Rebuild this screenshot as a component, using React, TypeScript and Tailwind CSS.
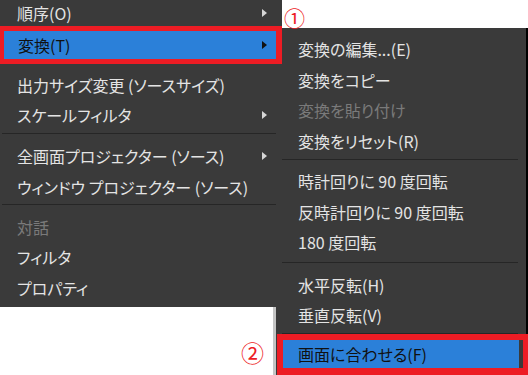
import React from "react";

const Arrow = ({ dark = false }: { dark?: boolean }) => (
  <span
    className={
      dark
        ? "h-0 w-0 border-y-[4px] border-l-[5px] border-y-transparent border-l-[#111111]"
        : "h-0 w-0 border-y-[4px] border-l-[5px] border-y-transparent border-l-[#d6d6d6]"
    }
  />
);

const LRow = ({
  label,
  h,
  arrow = false,
  disabled = false,
}: {
  label: string;
  h: string;
  arrow?: boolean;
  disabled?: boolean;
}) => (
  <div className={`flex items-center justify-between pl-[17px] pr-[15px] ${h}`}>
    <span className={disabled ? "text-[#7a7a7a]" : "text-[#e4e4e4]"}>{label}</span>
    {arrow && <Arrow />}
  </div>
);

const RRow = ({ label, h, disabled = false }: { label: string; h: string; disabled?: boolean }) => (
  <div className={`flex items-center pl-[16px] ${h}`}>
    <span className={disabled ? "text-[#7a7a7a]" : "text-[#e4e4e4]"}>{label}</span>
  </div>
);

export default function App() {
  return (
    <div className="flex h-[375px] w-[528px] overflow-hidden bg-white font-['Noto_Sans_CJK_JP','Noto_Sans',sans-serif] text-[16px] leading-none [font-feature-settings:'palt']">
      {/* left column */}
      <div className="flex w-[282px] flex-col">
        <div className="flex h-[307px] flex-col bg-[#3a3a3a]">
          <LRow label="順序(O)" h="h-[26px]" arrow />
          <div className="flex h-[38px] border-b-[5px] border-l-[4px] border-r-[6px] border-t-[5px] border-[#ed1c24]">
            <div className="flex flex-1 items-center justify-between bg-[#2b80d9] pl-[14px] pr-[9px]">
              <span className="text-[#111111]">変換(T)</span>
              <Arrow dark />
            </div>
          </div>
          <div className="h-[6px]" />
          <LRow label="出力サイズ変更 (ソースサイズ)" h="h-[30px]" />
          <LRow label="スケールフィルタ" h="h-[30px]" arrow />
          <div className="pb-[6px] pt-[3px]">
            <div className="ml-[2px] mr-[6px] h-px bg-[#262626]" />
          </div>
          <LRow label="全画面プロジェクター (ソース)" h="h-[31px]" arrow />
          <LRow label="ウィンドウ プロジェクター (ソース)" h="h-[31px]" />
          <div className="pb-[7px] pt-[2px]">
            <div className="ml-[2px] mr-[6px] h-px bg-[#262626]" />
          </div>
          <LRow label="対話" h="h-[30px]" disabled />
          <LRow label="フィルタ" h="h-[30px]" />
          <LRow label="プロパティ" h="h-[31px]" />
        </div>
        <div className="flex h-[68px]">
          <div className="relative w-[273px] bg-white">
            <span className="absolute left-[241px] top-[34px] text-[23px] text-[#ed1c24]">②</span>
          </div>
          <div className="w-[3px] bg-[#c4c4c4]" />
          <div className="flex-1 bg-[#3a3a3a]" />
        </div>
      </div>

      {/* right column */}
      <div className="flex flex-1 flex-col">
        <div className="relative h-[28px] bg-white">
          <span className="absolute left-[2px] top-[7px] text-[21px] text-[#ed1c24]">①</span>
        </div>
        <div className="flex flex-1 flex-col border-r-2 border-black bg-[#3a3a3a] pt-[5px]">
          <RRow label="変換の編集...(E)" h="h-[32px]" />
          <RRow label="変換をコピー" h="h-[30px]" />
          <RRow label="変換を貼り付け" h="h-[30px]" disabled />
          <RRow label="変換をリセット(R)" h="h-[32px]" />
          <div className="pb-[5px] pt-[2px]">
            <div className="mr-[8px] h-px bg-[#262626]" />
          </div>
          <RRow label="時計回りに 90 度回転" h="h-[31px]" />
          <RRow label="反時計回りに 90 度回転" h="h-[31px]" />
          <RRow label="180 度回転" h="h-[30px]" />
          <div className="pb-[6px] pt-[5px]">
            <div className="mr-[8px] h-px bg-[#262626]" />
          </div>
          <RRow label="水平反転(H)" h="h-[31px]" />
          <RRow label="垂直反転(V)" h="h-[30px]" />
          <div className="pb-0 pt-[3px]">
            <div className="mr-[8px] h-px bg-[#262626]" />
          </div>
          <div className="-ml-[5px] -mr-[2px] flex h-[41px] border-b-[7px] border-l-[6px] border-r-[5px] border-t-[6px] border-[#ed1c24]">
            <div className="flex flex-1 items-center bg-[#2b80d9] pl-[15px]">
              <span className="text-[#111111]">画面に合わせる(F)</span>
            </div>
            <div className="w-[4px] bg-[#3a3a3a]" />
          </div>
        </div>
      </div>
    </div>
  );
}
